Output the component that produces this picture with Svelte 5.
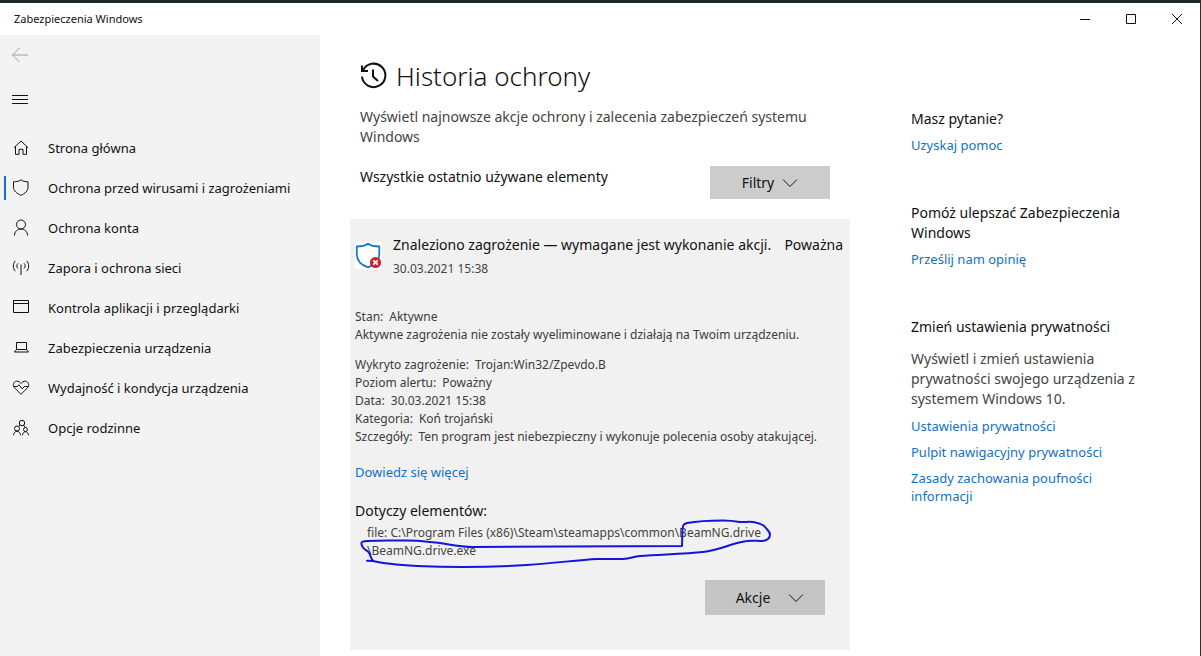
<script lang="ts">
  const navItems = [
    { icon: 'home', label: 'Strona główna' },
    { icon: 'shield', label: 'Ochrona przed wirusami i zagrożeniami', active: true },
    { icon: 'person', label: 'Ochrona konta' },
    { icon: 'signal', label: 'Zapora i ochrona sieci' },
    { icon: 'window', label: 'Kontrola aplikacji i przeglądarki' },
    { icon: 'laptop', label: 'Zabezpieczenia urządzenia' },
    { icon: 'heart', label: 'Wydajność i kondycja urządzenia' },
    { icon: 'family', label: 'Opcje rodzinne' }
  ];

  const details = [
    ['Wykryto zagrożenie:', 'Trojan:Win32/Zpevdo.B'],
    ['Poziom alertu:', 'Poważny'],
    ['Data:', '30.03.2021 15:38'],
    ['Kategoria:', 'Koń trojański'],
    ['Szczegóły:', 'Ten program jest niebezpieczny i wykonuje polecenia osoby atakującej.']
  ];

  const privacyLinks = [
    'Ustawienia prywatności',
    'Pulpit nawigacyjny prywatności',
    'Zasady zachowania poufności informacji'
  ];
</script>

{#snippet chevron()}
  <svg class="chevron" width="16" height="10" viewBox="0 0 16 10" aria-hidden="true">
    <path d="M1 1.5 8 8.5 15 1.5" />
  </svg>
{/snippet}

<div class="window">
  <header class="titlebar">
    <span class="titlebar__name">Zabezpieczenia Windows</span>
    <div class="titlebar__controls">
      <button type="button" aria-label="Minimalizuj">
        <svg width="12" height="12" viewBox="0 0 12 12"><path d="M1 6.5h10" /></svg>
      </button>
      <button type="button" aria-label="Maksymalizuj">
        <svg width="12" height="12" viewBox="0 0 12 12"><path d="M1.5 1.5h9v9h-9z" /></svg>
      </button>
      <button type="button" aria-label="Zamknij">
        <svg width="12" height="12" viewBox="0 0 12 12"><path d="m1 1 10 10M11 1 1 11" /></svg>
      </button>
    </div>
  </header>

  <div class="body">
    <aside class="sidebar">
      <button class="sidebar__button sidebar__button--back" type="button" aria-label="Wstecz">
        <svg width="18" height="16" viewBox="0 0 18 16"><path d="M17 8H1.5M8.5 1 1.5 8l7 7" /></svg>
      </button>
      <button class="sidebar__button" type="button" aria-label="Menu">
        <svg width="18" height="12" viewBox="0 0 18 12"><path d="M1 1.5h16M1 5.5h16M1 9.5h16" /></svg>
      </button>

      <nav>
        {#each navItems as item}
          <a href="#{item.icon}" class:active={item.active} aria-current={item.active ? 'page' : undefined}>
            <svg width="18" height="18" viewBox="0 0 18 18" aria-hidden="true">
              {#if item.icon === 'home'}
                <path d="M1.800 8.800 9 2l7.200 6.800M3.500 7.500v7.800H7v-5h4v5h3.500V7.500" />
              {:else if item.icon === 'shield'}
                <path d="M9 .8c1.700 1.400 4 2 7 2V8c0 4-2.800 6.500-7 8.300C4.800 14.500 1.500 12 1.500 8V2.800c3 0 5.800-.6 7.500-2z" />
              {:else if item.icon === 'person'}
                <circle cx="9" cy="5.500" r="4.500" />
                <path d="M2.500 16.500C2.500 12.500 5.500 10 9 10s6.500 2.500 6.500 6.500" />
              {:else if item.icon === 'signal'}
                <path d="M9 5.500V16M6 4.300a3.500 3.500 0 0 0 0 5.200M12 4.300a3.500 3.500 0 0 1 0 5.200M3.300 1.800C.7 4.500.7 9.500 3.300 12.200M14.700 1.800c2.600 2.700 2.600 7.700 0 10.400" />
              {:else if item.icon === 'window'}
                <path d="M1.500 1.500h15v12h-15zM1.500 4.500h15" />
              {:else if item.icon === 'laptop'}
                <path d="M4.500 3.500h10v7h-10zM4.500 10.500l-2 2.500h14l-2-2.500" />
              {:else if item.icon === 'heart'}
                <path d="M9 15.300 2.300 8.500C.3 6 1.500 2.500 4.500 2.200 6.500 2 8 3.200 9 4.500c1-1.300 2.500-2.500 4.500-2.300 3 .3 4.200 3.800 2.200 6.300z" />
                <path d="M1.500 7.500h3.700L7 5.800l3.200 4 2.300-2.300h4" />
              {:else}
                <circle cx="10" cy="4" r="2.700" />
                <circle cx="5" cy="9.500" r="2.500" />
                <circle cx="13.500" cy="10.500" r="2" />
                <path d="M1.500 16.200c.3-5.200 6.700-5.200 7 0M10.500 16.200c.3-4.600 5.700-4.600 6 0M8 6 6.500 7.500M11.500 6l1.500 2.500" />
              {/if}
            </svg>
            <span>{item.label}</span>
          </a>
        {/each}
      </nav>
    </aside>

    <div class="content">
      <main>
        <div class="intro">
          <h1>
            <svg width="27" height="28" viewBox="0 0 27 28" aria-hidden="true">
              <path d="M3 8.500A11.700 11.700 0 1 1 2 14.500M2 3.500v5.500h6M13 7.500v7l5 4.500" />
            </svg>
            Historia ochrony
          </h1>
          <p class="lead">Wyświetl najnowsze akcje ochrony i zalecenia zabezpieczeń systemu Windows</p>
          <div class="filter">
            <span>Wszystkie ostatnio używane elementy</span>
            <button class="dropdown" type="button">Filtry {@render chevron()}</button>
          </div>
        </div>

        <article class="threat">
          <div class="threat__head">
            <svg class="threat__icon" width="27" height="27" viewBox="0 0 27 27" aria-hidden="true">
              <path d="M13 1.800c2.800 2 6.500 2.700 11.300 2.700v7.500c0 6.500-4.300 11-11.300 13.300C6 23 1.800 18.500 1.800 12V4.500C6.500 4.500 10.200 3.800 13 1.800z" fill="#fff" stroke="#1a7ac8" stroke-width="1.800" />
              <circle cx="20.500" cy="20.500" r="5.600" fill="#cb2431" stroke="none" />
              <path d="m18.300 18.300 4.400 4.400M22.700 18.300l-4.400 4.400" stroke="#fff" stroke-width="1.800" />
            </svg>
            <div class="threat__title">
              <h2>Znaleziono zagrożenie — wymagane jest wykonanie akcji.</h2>
              <time datetime="2021-03-30T15:38">30.03.2021 15:38</time>
            </div>
            <span class="threat__severity">Poważna</span>
          </div>

          <div class="threat__text">
            <p><span class="key">Stan:</span>Aktywne</p>
            <p>Aktywne zagrożenia nie zostały wyeliminowane i działają na Twoim urządzeniu.</p>
          </div>

          <div class="threat__text threat__details">
            {#each details as [key, value]}
              <p><span class="key">{key}</span>{value}</p>
            {/each}
          </div>

          <a class="more" href="#more">Dowiedz się więcej</a>

          <h3>Dotyczy elementów:</h3>
          <div class="files">
            <p>file: C:\Program Files (x86)\Steam\steamapps\common\BeamNG.drive<br />\BeamNG.drive.exe</p>
            <svg class="marker" width="430" height="60" viewBox="350 515 430 60" aria-hidden="true">
              <path d="M367 560.700 373 561C385 564 400 565 417 566c35 1.500 80 .8 110-1 30-2 50-5 70-6 12-.2 20 .3 26 0 8-.6 10-2.500 17-3 22-1.600 45-2 63-4 18-2 28-9 44-11 8-1.200 12 1 18-.5 4-1.500 5-3.500 5-6 0-3-3-5-5-7.500-3-3.500-7-4-12-5-5-.7-8 .3-13 0-6-1-11-1.500-17-1.500-12 0-25 .5-36 2.500-4 1-4 3-4.500 6l-.5 17-209 1c-12 0-23-2.500-33-4-12-1-20-2.500-33-2.500-15 0-26-.5-40 .5-7 .5-6.500 2.500-4 6.500 2 3 5 3 6.500 6 1.500 3 1.500 6 4 7.500" />
            </svg>
          </div>

          <button class="dropdown dropdown--actions" type="button">Akcje {@render chevron()}</button>
        </article>
      </main>

      <aside class="help">
        <section>
          <h2>Masz pytanie?</h2>
          <a href="#help">Uzyskaj pomoc</a>
        </section>
        <section>
          <h2>Pomóż ulepszać Zabezpieczenia Windows</h2>
          <a href="#feedback">Prześlij nam opinię</a>
        </section>
        <section>
          <h2>Zmień ustawienia prywatności</h2>
          <p>Wyświetl i zmień ustawienia prywatności swojego urządzenia z systemem Windows 10.</p>
          {#each privacyLinks as link}
            <a href="#privacy">{link}</a>
          {/each}
        </section>
      </aside>
    </div>
  </div>
</div>

<style>
  :global(body) {
    margin: 0;
    background: #fff;
  }

  .window {
    box-sizing: border-box;
    display: flex;
    flex-direction: column;
    min-height: 100vh;
    border-top: 3px solid #1f2a27;
    border-right: 1px solid #2e302e;
    background: #fff;
    color: #111;
    font-family: 'Noto Sans', 'Open Sans', sans-serif;
    font-size: 14px;
    line-height: 20px;
  }

  h1,
  h2,
  h3,
  p {
    margin: 0;
    font-size: inherit;
    font-weight: 400;
  }

  button {
    padding: 0;
    border: 0;
    background: none;
    color: inherit;
    font: inherit;
  }

  a {
    color: #0f72c6;
    text-decoration: none;
  }

  svg {
    flex: none;
    fill: none;
    stroke: currentColor;
  }

  .titlebar {
    display: flex;
    justify-content: space-between;
    height: 32px;
    line-height: 32px;
  }

  .titlebar__name {
    padding-left: 14px;
    font-size: 11px;
  }

  .titlebar__controls {
    display: flex;
  }

  .titlebar__controls button {
    display: grid;
    place-items: center;
    width: 46px;
  }

  .body {
    display: flex;
    flex: 1;
  }

  .sidebar {
    flex: none;
    width: 320px;
    background: #f3f3f3;
  }

  .sidebar__button {
    display: grid;
    place-items: center;
    width: 40px;
    height: 40px;
    margin-bottom: 5px;
  }

  .sidebar__button--back {
    color: #a0a0a0;
  }

  nav {
    padding-top: 3px;
    font-size: 13px;
  }

  nav a {
    display: flex;
    align-items: center;
    gap: 18px;
    height: 40px;
    padding-left: 12px;
    color: #111;
  }

  nav a.active {
    padding-left: 4px;
  }

  nav a.active::before {
    width: 2px;
    height: 24px;
    margin-right: -12px;
    background: #0f72c6;
    content: '';
  }

  .content {
    display: grid;
    flex: 1;
    grid-template-columns: minmax(0, 500px) minmax(0, 240px);
    gap: 61px;
    align-items: start;
    padding: 23px 0 6px 30px;
  }

  .intro {
    padding: 0 20px 20px 10px;
  }

  h1 {
    display: flex;
    align-items: center;
    gap: 9px;
    font-size: 26px;
    font-weight: 300;
    line-height: 36px;
  }

  h1 svg {
    stroke-width: 2;
  }

  .lead {
    margin-top: 13px;
    color: #444;
  }

  .filter {
    display: flex;
    justify-content: space-between;
    margin-top: 19px;
  }

  .filter span {
    padding-top: 1px;
  }

  .dropdown {
    display: flex;
    align-items: center;
    justify-content: center;
    gap: 8px;
    width: 120px;
    height: 33px;
    background: #ccc;
  }

  .dropdown--actions {
    gap: 18px;
    height: 35px;
    margin: 20px 20px 0 auto;
    padding-left: 10px;
    background: #c5c5c5;
  }

  .threat {
    padding: 16px 5px 35px;
    background: #f1f1f1;
  }

  .threat__head {
    display: flex;
    margin-right: 2px;
  }

  .threat__icon {
    margin: 7px 11px 0 0;
    background: #fff;
  }

  .threat__title {
    flex: 1;
  }

  .threat__title time {
    display: block;
    margin-top: 5px;
    color: #444;
    font-size: 12px;
    line-height: 18px;
  }

  .threat__text {
    margin-top: 30px;
    color: #3c3c3c;
    font-size: 12px;
    line-height: 18px;
  }

  .threat__details {
    margin-top: 12px;
  }

  .key {
    margin-right: 6px;
  }

  .more {
    display: block;
    margin-top: 17px;
    font-size: 13px;
    line-height: 18px;
  }

  .threat h3 {
    margin-top: 20px;
  }

  .files {
    position: relative;
    margin-top: 3px;
    padding-left: 12px;
    color: #444;
    font-size: 12px;
    line-height: 18px;
  }

  .marker {
    position: absolute;
    top: -9px;
    left: -5px;
    stroke: #1414d8;
    stroke-linecap: round;
    stroke-linejoin: round;
    stroke-width: 2;
  }

  .help {
    display: grid;
    gap: 49px;
    padding-top: 51px;
  }

  .help p {
    margin: 12px 0 8px;
    color: #444;
  }

  .help a {
    display: block;
    max-width: 200px;
    margin-top: 8px;
    font-size: 13px;
    line-height: 18px;
  }

  .help h2 + a {
    margin-top: 7px;
  }
</style>
